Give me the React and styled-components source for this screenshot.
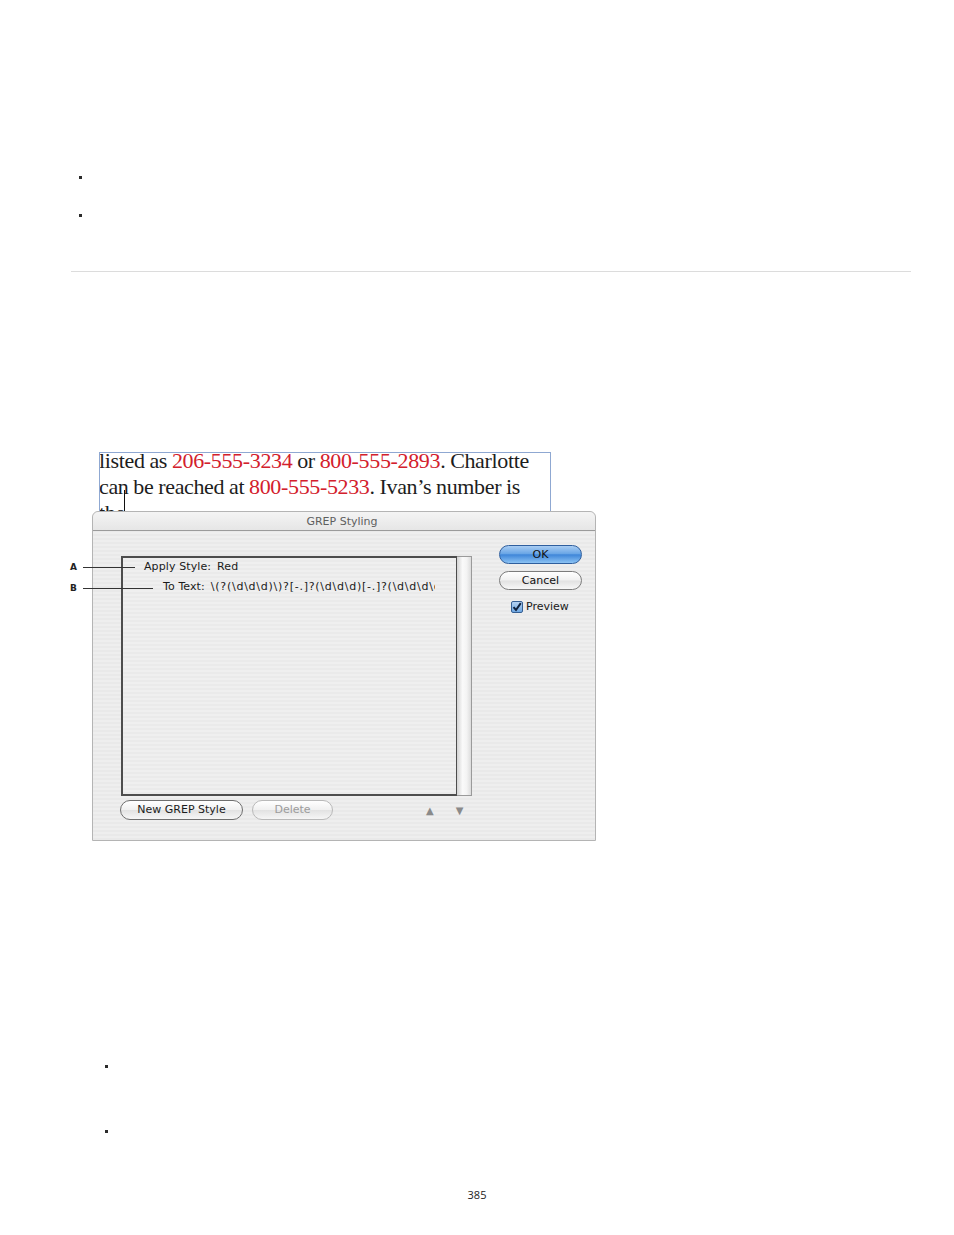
import React from "react";
import styled, { createGlobalStyle } from "styled-components";

const GlobalStyle = createGlobalStyle`
  body {
    margin: 0;
    background: #fff;
    font-family: "Open Sans", "Liberation Sans", sans-serif;
  }
`;

const Page = styled.div`
  display: flow-root;
  width: 954px;
  height: 1235px;
  overflow: hidden;
  position: relative;
`;

const BulletList = styled.ul`
  list-style: none;
  margin: ${(p) => p.$top}px 0 0 ${(p) => p.$left}px;
  padding: 0;
`;

const BulletItem = styled.li`
  height: ${(p) => p.$h}px;
  &::before {
    content: "";
    display: block;
    width: 3px;
    height: 3px;
    background: #2b2b2b;
  }
`;

const Rule = styled.hr`
  margin: 19px 0 0 71px;
  width: 840px;
  border: 0;
  border-top: 1px solid #dcdcdc;
  height: 0;
`;

const Figure = styled.div`
  position: relative;
  margin: 180px 0 0 92px;
  width: 504px;
`;

const TextFrame = styled.div`
  position: relative;
  margin-left: 7px;
  width: 450px;
  height: 58px;
  border: 1px solid #8fa8d2;
  border-bottom: 0;
  overflow: hidden;
  font-family: "Liberation Serif", "Times New Roman", serif;
  font-size: 22px;
  line-height: 26px;
  color: #1d1d1d;
  letter-spacing: -0.35px;
  word-spacing: -0.3px;
`;

const Lines = styled.div`
  margin-top: -5px;
  margin-left: -1px;
  white-space: nowrap;
`;

const Red = styled.span`
  color: #d3202c;
`;

const Cursor = styled.span`
  position: absolute;
  left: 24px;
  top: 37px;
  width: 1px;
  height: 22px;
  background: #111;
`;

const Dialog = styled.div`
  width: 502px;
  height: 328px;
  border: 1px solid #b4b4b4;
  border-radius: 6px 6px 0 0;
  background: repeating-linear-gradient(
    to bottom,
    #eeeeee 0px,
    #eeeeee 2px,
    #e9e9e9 2px,
    #e9e9e9 4px
  );
  display: flex;
  flex-direction: column;
  font-family: "DejaVu Sans", "Liberation Sans", sans-serif;
`;

const TitleBar = styled.div`
  height: 18px;
  border-bottom: 1px solid #9a9a9a;
  display: flex;
  align-items: center;
  justify-content: center;
  font-size: 11px;
  color: #5e5e5e;
  padding-right: 4px;
  border-radius: 6px 6px 0 0;
  background: linear-gradient(#f4f4f4, #e6e6e6);
`;

const Body = styled.div`
  display: flex;
  padding: 14px 0 0 28px;
`;

const LeftCol = styled.div`
  display: flex;
  flex-direction: column;
  padding-top: 11px;
`;

const ListBox = styled.div`
  display: flex;
  width: 351px;
  height: 240px;
`;

const ListArea = styled.div`
  width: 333px;
  border: 2px solid #4d4d4d;
  border-right-width: 1px;
  background: repeating-linear-gradient(
    to bottom,
    #efefef 0px,
    #efefef 2px,
    #eaeaea 2px,
    #eaeaea 4px
  );
  padding-top: 1px;
  overflow: hidden;
`;

const Scrollbar = styled.div`
  width: 14px;
  border: 1px solid #9a9a9a;
  border-left: 0;
  background: linear-gradient(to right, #d4d4d4, #fafafa 40%, #f3f3f3 70%, #dcdcdc);
`;

const Row = styled.div`
  padding-left: ${(p) => p.$indent}px;
  width: ${(p) => 312 - p.$indent}px;
  height: 20px;
  line-height: 16px;
  font-size: 11px;
  color: #1a1a1a;
  white-space: nowrap;
  overflow: hidden;
  letter-spacing: 0.1px;
`;

const Key = styled.span`
  margin-right: 6px;
`;

const Pattern = styled.span`
  letter-spacing: 0.75px;
`;

const BottomBar = styled.div`
  display: flex;
  align-items: center;
  margin-top: 4px;
  margin-left: -1px;
`;

const PillButton = styled.button`
  height: 20px;
  width: ${(p) => p.$w}px;
  margin-right: ${(p) => p.$mr || 0}px;
  border-radius: 10px;
  border: 1px solid ${(p) => (p.$disabled ? "#b9b9b9" : "#6f6f6f")};
  background: linear-gradient(#ffffff, #f0f0f0 50%, #e2e2e2 51%, #f6f6f6);
  font-family: "DejaVu Sans", "Liberation Sans", sans-serif;
  font-size: 11px;
  color: ${(p) => (p.$disabled ? "#9c9c9c" : "#1c1c1c")};
  padding: 0;
  line-height: 18px;
`;

const Arrow = styled.span`
  font-size: 10px;
  color: #8a8a8a;
  margin-left: ${(p) => p.$ml}px;
`;

const RightCol = styled.div`
  display: flex;
  flex-direction: column;
  margin-left: 27px;
`;

const AquaButton = styled.button`
  width: 83px;
  height: ${(p) => p.$h}px;
  margin-bottom: ${(p) => p.$mb}px;
  border-radius: 10px;
  border: 1px solid ${(p) => (p.$primary ? "#2f5f9e" : "#7c7c7c")};
  background: ${(p) =>
    p.$primary
      ? "linear-gradient(#a9cdf3, #6aa6e6 45%, #3f86d9 52%, #8cc3f4)"
      : "linear-gradient(#ffffff, #f1f1f1 48%, #e1e1e1 52%, #f7f7f7)"};
  font-family: "DejaVu Sans", "Liberation Sans", sans-serif;
  font-size: 11px;
  color: #111;
  padding: 0;
  line-height: 16px;
`;

const CheckRow = styled.label`
  display: flex;
  align-items: center;
  margin: 3px 0 0 12px;
  font-size: 11px;
  color: #1a1a1a;
  gap: 3px;
`;

const CheckBox = styled.span`
  width: 12px;
  height: 12px;
  border: 1px solid #355f93;
  border-radius: 2px;
  background: linear-gradient(#b5d3f3, #6ea7e2);
  display: flex;
  align-items: center;
  justify-content: center;
  box-sizing: border-box;
`;

const Callout = styled.div`
  position: absolute;
  left: -22px;
  top: ${(p) => p.$top}px;
  display: flex;
  align-items: center;
  font-family: "DejaVu Sans", "Liberation Sans", sans-serif;
  font-size: 9px;
  font-weight: bold;
  color: #222;
`;

const CalloutLine = styled.span`
  display: block;
  margin-left: 6px;
  width: ${(p) => p.$w}px;
  height: 1px;
  background: #333;
`;

const PageNumber = styled.div`
  margin-top: 55px;
  text-align: center;
  font-family: "Open Sans", "Liberation Sans", sans-serif;
  font-size: 11px;
  line-height: 14px;
  color: #222;
`;

export default function App() {
  return (
    <Page>
      <GlobalStyle />
      <BulletList $top={176} $left={79}>
        <BulletItem $h={38} />
        <BulletItem $h={38} />
      </BulletList>
      <Rule />
      <Figure>
        <TextFrame>
          <Lines>
            <div>
              listed as <Red>206-555-3234</Red> or <Red>800-555-2893</Red>. Charlotte
            </div>
            <div>
              can be reached at <Red>800-555-5233</Red>. Ivan’s number is
            </div>
            <div>the</div>
          </Lines>
          <Cursor />
        </TextFrame>
        <Dialog>
          <TitleBar>GREP Styling</TitleBar>
          <Body>
            <LeftCol>
              <ListBox>
                <ListArea>
                  <Row $indent={21}>
                    <Key>Apply Style:</Key>Red
                  </Row>
                  <Row $indent={40}>
                    <Key>To Text:</Key>
                    <Pattern>\(?(\d\d\d)\)?[-.]?(\d\d\d)[-.]?(\d\d\d\d)</Pattern>
                  </Row>
                </ListArea>
                <Scrollbar />
              </ListBox>
              <BottomBar>
                <PillButton $w={123} $mr={9}>New GREP Style</PillButton>
                <PillButton $w={81} $disabled>Delete</PillButton>
                <Arrow $ml={93}>▲</Arrow>
                <Arrow $ml={22}>▼</Arrow>
              </BottomBar>
            </LeftCol>
            <RightCol>
              <AquaButton $primary $h={19} $mb={7}>OK</AquaButton>
              <AquaButton $h={19} $mb={7}>Cancel</AquaButton>
              <CheckRow>
                <CheckBox>
                  <svg width="10" height="10" viewBox="0 0 10 10">
                    <path d="M1.5 5.2 L4 8 L8.8 1.2" fill="none" stroke="#10223d" strokeWidth="2" />
                  </svg>
                </CheckBox>
                Preview
              </CheckRow>
            </RightCol>
          </Body>
        </Dialog>
        <Callout $top={110}>
          A<CalloutLine $w={52} />
        </Callout>
        <Callout $top={131}>
          B<CalloutLine $w={70} />
        </Callout>
      </Figure>
      <BulletList $top={224} $left={105}>
        <BulletItem $h={65} />
        <BulletItem $h={3} />
      </BulletList>
      <PageNumber>385</PageNumber>
    </Page>
  );
}
